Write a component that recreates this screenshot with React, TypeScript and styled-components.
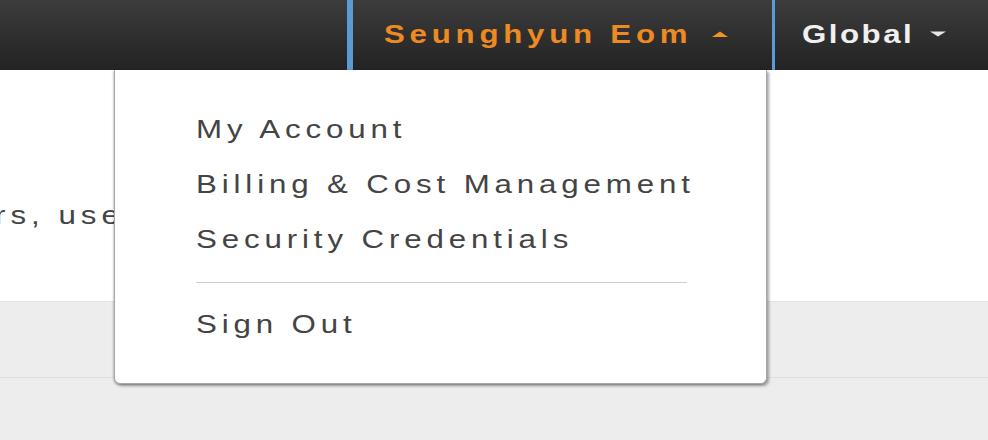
import React from "react";
import styled, { createGlobalStyle } from "styled-components";

const Global = createGlobalStyle`
  html, body { margin: 0; padding: 0; }
  body {
    width: 988px;
    height: 440px;
    overflow: hidden;
    background: #ededed;
    font-family: "Liberation Sans", Arial, sans-serif;
  }
`;

const Page = styled.div`
  position: relative;
  width: 988px;
  height: 440px;
  overflow: hidden;
  display: flex;
  flex-direction: column;
  background: #ededed;
`;

const TopBar = styled.header`
  display: flex;
  height: 70px;
  background: linear-gradient(#3c3c3c, #232323);
`;

const BarSpacer = styled.div`
  flex: 1;
`;

const NavItem = styled.div<{ $active?: boolean; $w: number; $pl: number }>`
  box-sizing: border-box;
  width: ${(p) => p.$w}px;
  height: 70px;
  display: flex;
  align-items: center;
  padding-left: ${(p) => p.$pl}px;
  border-left: ${(p) => (p.$active ? "6px solid #5b9bd5" : "none")};
  border-right: ${(p) => (p.$active ? "3px solid #5b9bd5" : "none")};
`;

/* the reference text is horizontally stretched; scaleX reproduces the glyph shapes */
const Wide = styled.span`
  display: inline-block;
  transform: scaleX(1.25);
  transform-origin: left center;
`;

const NavLabel = styled(Wide)<{ $color: string; $ls: number }>`
  font-weight: bold;
  font-size: 25px;
  letter-spacing: ${(p) => p.$ls}px;
  color: ${(p) => p.$color};
  margin-top: -2px;
`;

const CaretWrap = styled.span<{ $ml: number }>`
  margin-left: ${(p) => p.$ml}px;
  display: flex;
  align-items: center;
  margin-top: -2px;
`;

const WhiteArea = styled.section`
  height: 232px;
  background: #fff;
  border-bottom: 1px solid #e2e2e2;
  box-sizing: border-box;
  display: flex;
  align-items: flex-start;
`;

const Intro = styled(Wide)`
  margin: 131px 0 0 -5px;
  font-size: 25px;
  letter-spacing: 4px;
  color: #444;
  white-space: nowrap;
`;

const GreyBand = styled.div`
  height: 75px;
  border-bottom: 1px solid #e0e0e0;
`;

const Dropdown = styled.nav`
  position: absolute;
  top: 70px;
  left: 114px;
  width: 653px;
  box-sizing: border-box;
  background: #fff;
  border: 1px solid #a8a8a8;
  border-top: none;
  border-radius: 0 0 6px 6px;
  box-shadow: 2px 2px 3px rgba(0, 0, 0, 0.35), -1px 1px 2px rgba(0, 0, 0, 0.2);
  padding: 32px 79px 31px 81px;
`;

const MenuItem = styled.a`
  display: flex;
  align-items: center;
  height: 55px;
  text-decoration: none;
  white-space: nowrap;
`;

const MenuText = styled(Wide)`
  font-size: 25px;
  line-height: 1;
  letter-spacing: 3.9px;
  color: #444;
`;

const Divider = styled.hr`
  margin: 15px 0 14px;
  border: none;
  border-top: 1px solid #cfcfcf;
  height: 0;
`;

const items = ["My Account", "Billing & Cost Management", "Security Credentials"];

export default function App() {
  return (
    <>
      <Global />
      <Page>
        <TopBar>
          <BarSpacer />
          <NavItem $active $w={428} $pl={31}>
            <NavLabel $color="#ee8a22" $ls={3.8}>Seunghyun Eom</NavLabel>
            <CaretWrap $ml={78}>
              <svg width="22" height="8" viewBox="0 0 22 8">
                <path d="M3 7 L11 1.5 L19 7 Z" fill="#f6921e" />
              </svg>
            </CaretWrap>
          </NavItem>
          <NavItem $w={213} $pl={27}>
            <NavLabel $color="#f0f0f0" $ls={2}>Global</NavLabel>
            <CaretWrap $ml={36}>
              <svg width="20" height="8" viewBox="0 0 20 8">
                <path d="M2 1.5 L10 6.5 L18 1.5 Z" fill="#e6e6e6" />
              </svg>
            </CaretWrap>
          </NavItem>
        </TopBar>
        <WhiteArea>
          <Intro>rs, users</Intro>
        </WhiteArea>
        <GreyBand />
        <Dropdown>
          {items.map((t) => (
            <MenuItem href="#" key={t}>
              <MenuText>{t}</MenuText>
            </MenuItem>
          ))}
          <Divider />
          <MenuItem href="#">
            <MenuText>Sign Out</MenuText>
          </MenuItem>
        </Dropdown>
      </Page>
    </>
  );
}
